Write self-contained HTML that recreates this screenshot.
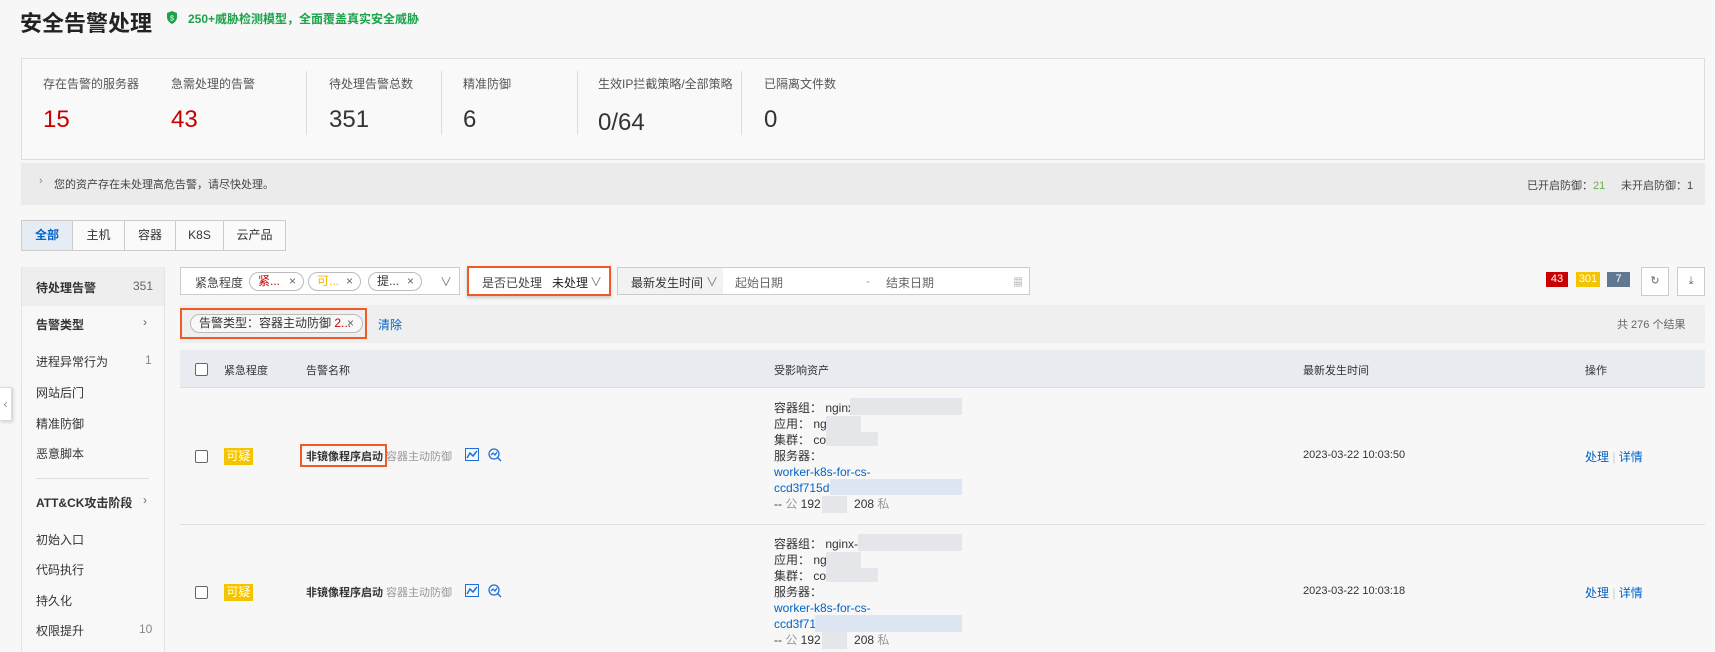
<!DOCTYPE html>
<html><head><meta charset="utf-8"><style>
*{margin:0;padding:0;box-sizing:border-box}
body{width:1715px;height:652px;background:#f7f7f7;font-family:"Liberation Sans","Noto Sans CJK SC",sans-serif;font-size:12px;color:#333;position:relative;overflow:hidden}
.a{position:absolute;white-space:nowrap}
.lbl{font-size:12px;color:#555}
.num{font-size:24px;color:#333}
.red{color:#c80000}
.vd{position:absolute;width:1px;background:#ddd}
.tab{position:absolute;top:220px;height:31px;border:1px solid #ccc;background:#fafafa;text-align:center;line-height:29px;font-size:12px}
.pill{position:absolute;top:272px;height:19px;border:1px solid #bbb;border-radius:10px;line-height:17px;padding-left:8px;font-size:12px;background:#fff}
.pill i{position:absolute;right:7px;font-style:normal;color:#666}
.side{font-size:12px;color:#333}
.blue{color:#0064c8}
.ast{font-size:12px;line-height:16px}
.blur{position:absolute;background:#e4e6ea}
.cb{position:absolute;width:13px;height:13px;border:1px solid #666;border-radius:2px;background:#fff}
.badge{position:absolute;background:#f5c400;color:#fff;font-size:12px;text-align:center;line-height:17px;height:17px;width:29px}
</style></head><body>

<div class="a" style="left:20px;top:6px;font-size:22px;font-weight:bold;color:#222">安全告警处理</div>
<svg class="a" style="left:166px;top:11px" width="12" height="13" viewBox="0 0 12 13"><path d="M6 0L11 2V6C11 9 9 11.5 6 13C3 11.5 1 9 1 6V2Z" fill="#1aa34a"/><text x="6" y="9.5" font-size="7" fill="#fff" text-anchor="middle" font-family="Liberation Sans">$</text></svg>
<div class="a" style="left:188px;top:10px;font-size:12px;color:#1aa34a;font-weight:bold">250+威胁检测模型，全面覆盖真实安全威胁</div>

<div class="a" style="left:21px;top:58px;width:1684px;height:102px;border:1px solid #ddd;background:#f9f9f9"></div>
<div class="a lbl" style="left:43px;top:75px">存在告警的服务器</div>
<div class="a lbl" style="left:171px;top:75px">急需处理的告警</div>
<div class="a lbl" style="left:329px;top:75px">待处理告警总数</div>
<div class="a lbl" style="left:463px;top:75px">精准防御</div>
<div class="a lbl" style="left:598px;top:75px">生效IP拦截策略/全部策略</div>
<div class="a lbl" style="left:764px;top:75px">已隔离文件数</div>
<div class="vd" style="left:306px;top:71px;height:64px"></div>
<div class="vd" style="left:441px;top:71px;height:64px"></div>
<div class="vd" style="left:577px;top:71px;height:64px"></div>
<div class="vd" style="left:741px;top:71px;height:64px"></div>
<div class="a num red" style="left:43px;top:106px">15</div>
<div class="a num red" style="left:171px;top:106px">43</div>
<div class="a num" style="left:329px;top:106px">351</div>
<div class="a num" style="left:463px;top:106px">6</div>
<div class="a num" style="left:598px;top:109px">0/64</div>
<div class="a num" style="left:764px;top:106px">0</div>

<div class="a" style="left:21px;top:163px;width:1684px;height:42px;background:#ebebeb"></div>
<div class="a" style="left:39px;top:175px;color:#888;font-size:11px">›</div>
<div class="a" style="left:54px;top:176px;font-size:11px;color:#444">您的资产存在未处理高危告警，请尽快处理。</div>
<div class="a" style="left:1527px;top:177px;font-size:11px;color:#444">已开启防御：<span style="color:#6ab04c">21</span></div>
<div class="a" style="left:1621px;top:177px;font-size:11px;color:#444">未开启防御：1</div>

<div class="tab" style="left:21px;width:52px;background:#e6ecf4;color:#0064c8;font-weight:bold">全部</div>
<div class="tab" style="left:72px;width:53px">主机</div>
<div class="tab" style="left:124px;width:52px">容器</div>
<div class="tab" style="left:175px;width:49px">K8S</div>
<div class="tab" style="left:223px;width:63px">云产品</div>

<!-- sidebar -->
<div class="a" style="left:21px;top:267px;width:144px;height:385px;border-left:1px solid #e4e4e4;border-right:1px solid #e4e4e4;background:#f8f8f8"></div>
<div class="a" style="left:22px;top:267px;width:142px;height:39px;background:#eeeeee"></div>
<div class="a side" style="left:36px;top:279px;font-weight:bold">待处理告警</div>
<div class="a side" style="left:133px;top:279px;color:#666">351</div>
<div class="a side" style="left:36px;top:316px;font-weight:bold">告警类型</div>
<div class="a side" style="left:143px;top:315px;color:#666">›</div>
<div class="a side" style="left:36px;top:353px">进程异常行为</div>
<div class="a side" style="left:145px;top:353px;color:#888">1</div>
<div class="a side" style="left:36px;top:384px">网站后门</div>
<div class="a side" style="left:36px;top:415px">精准防御</div>
<div class="a side" style="left:36px;top:445px">恶意脚本</div>
<div class="a" style="left:36px;top:478px;width:113px;height:1px;background:#ddd"></div>
<div class="a side" style="left:36px;top:494px;font-weight:bold">ATT&amp;CK攻击阶段</div>
<div class="a side" style="left:143px;top:493px;color:#666">›</div>
<div class="a side" style="left:36px;top:531px">初始入口</div>
<div class="a side" style="left:36px;top:561px">代码执行</div>
<div class="a side" style="left:36px;top:592px">持久化</div>
<div class="a side" style="left:36px;top:622px">权限提升</div>
<div class="a side" style="left:139px;top:622px;color:#888">10</div>
<div class="a" style="left:0;top:387px;width:12px;height:34px;background:#fff;border:1px solid #ddd;border-left:none;box-shadow:1px 1px 3px #ccc;color:#888;font-size:12px;line-height:32px;text-align:center">‹</div>

<!-- filters -->
<div class="a" style="left:180px;top:267px;width:280px;height:28px;border:1px solid #ccc;background:#fff"></div>
<div class="a" style="left:195px;top:274px;color:#444">紧急程度</div>
<div class="pill" style="left:249px;width:55px"><span style="color:#c80000">紧...</span><i>×</i></div>
<div class="pill" style="left:308px;width:53px"><span style="color:#f5b400">可...</span><i>×</i></div>
<div class="pill" style="left:368px;width:54px"><span>提...</span><i>×</i></div>
<div class="a" style="left:440px;top:273px;color:#777">∨</div>
<div class="a" style="left:467px;top:266px;width:144px;height:30px;border:2px solid #f05a28;background:#fff;box-shadow:0 2px 3px #ccc"></div>
<div class="a" style="left:482px;top:274px;color:#444">是否已处理 &nbsp; <span style="color:#222">未处理</span></div>
<div class="a" style="left:590px;top:273px;color:#777">∨</div>
<div class="a" style="left:617px;top:267px;width:413px;height:28px;border:1px solid #ccc;background:#fff"></div>
<div class="a" style="left:618px;top:268px;width:105px;height:26px;background:#f2f2f2"></div>
<div class="a" style="left:631px;top:274px;color:#333">最新发生时间</div>
<div class="a" style="left:706px;top:273px;color:#777">∨</div>
<div class="a" style="left:735px;top:274px;color:#666">起始日期</div>
<div class="a" style="left:866px;top:274px;color:#999">-</div>
<div class="a" style="left:886px;top:274px;color:#666">结束日期</div>
<div class="a" style="left:1013px;top:274px;color:#999;font-size:10px">▦</div>

<div class="a" style="left:1546px;top:272px;width:22px;height:15px;background:#c80000;color:#fff;font-size:11px;text-align:center;line-height:15px">43</div>
<div class="a" style="left:1576px;top:272px;width:24px;height:15px;background:#f5c400;color:#fff;font-size:11px;text-align:center;line-height:15px">301</div>
<div class="a" style="left:1607px;top:272px;width:23px;height:15px;background:#5f7890;color:#fff;font-size:11px;text-align:center;line-height:15px">7</div>
<div class="a" style="left:1641px;top:267px;width:28px;height:29px;border:1px solid #ccc;background:#fff;text-align:center;line-height:27px;font-size:11px;color:#666">↻</div>
<div class="a" style="left:1677px;top:267px;width:28px;height:29px;border:1px solid #ccc;background:#fff;text-align:center;line-height:27px;font-size:11px;color:#666">⤓</div>

<div class="a" style="left:180px;top:305px;width:1525px;height:38px;background:#efefef"></div>
<div class="a" style="left:180px;top:308px;width:187px;height:31px;border:2px solid #f05a28"></div>
<div class="a" style="left:190px;top:314px;width:173px;height:19px;border:1px solid #bbb;border-radius:10px;background:#f8f8f8;line-height:17px;padding-left:8px">告警类型：容器主动防御 <span style="color:#c80000">2...</span><span style="position:absolute;right:8px;color:#666">×</span></div>
<div class="a blue" style="left:378px;top:316px;font-size:12px">清除</div>
<div class="a" style="left:1617px;top:316px;color:#666;font-size:11px">共 276 个结果</div>

<!-- table -->
<div class="a" style="left:180px;top:350px;width:1525px;height:38px;background:#e8ecf1;border-bottom:1px solid #dde"></div>
<div class="cb" style="left:195px;top:363px"></div>
<div class="a" style="left:224px;top:362px;font-size:11px">紧急程度</div>
<div class="a" style="left:306px;top:362px;font-size:11px">告警名称</div>
<div class="a" style="left:774px;top:362px;font-size:11px">受影响资产</div>
<div class="a" style="left:1303px;top:362px;font-size:11px">最新发生时间</div>
<div class="a" style="left:1585px;top:362px;font-size:11px">操作</div>

<!-- row1 -->
<div class="cb" style="left:195px;top:450px"></div>
<div class="badge" style="left:224px;top:448px">可疑</div>
<div class="a" style="left:300px;top:444px;width:87px;height:23px;border:2px solid #f05a28"></div>
<div class="a" style="left:306px;top:448px;font-weight:bold;font-size:11px">非镜像程序启动</div>
<div class="a" style="left:386px;top:448px;color:#999;font-size:11px">容器主动防御</div>
<svg class="a" style="left:465px;top:448px" width="14" height="13"><rect x="0.5" y="0.5" width="13" height="12" fill="none" stroke="#1e6fd9"/><path d="M2 10L5 5L8 8L12 3" fill="none" stroke="#1e6fd9" stroke-width="1.5"/></svg>
<svg class="a" style="left:488px;top:448px" width="14" height="14"><circle cx="6" cy="6" r="5" fill="none" stroke="#1e6fd9" stroke-width="1.3"/><path d="M9.5 9.5L13 13M3 7L5 5L7 7L9 4" fill="none" stroke="#1e6fd9" stroke-width="1.3"/></svg>
<div class="a ast" style="left:774px;top:400px">容器组：&nbsp;nginx-<br>应用：&nbsp;ngi<br>集群：&nbsp;cor<br>服务器：<br><span class="blue">worker-k8s-for-cs-</span><br><span class="blue">ccd3f715df</span><br>-- <span style="color:#999">公</span> 192 &nbsp; &nbsp; &nbsp; &nbsp; &nbsp;208 <span style="color:#999">私</span></div>
<div class="blur" style="left:850px;top:398px;width:112px;height:17px"></div>
<div class="blur" style="left:826px;top:416px;width:35px;height:30px"></div>
<div class="blur" style="left:830px;top:432px;width:48px;height:14px"></div>
<div class="blur" style="left:830px;top:479px;width:132px;height:16px;background:#dde6f2"></div>
<div class="blur" style="left:822px;top:496px;width:25px;height:17px"></div>
<div class="a" style="left:1303px;top:449px;font-size:11px">2023-03-22 10:03:50</div>
<div class="a blue" style="left:1585px;top:448px;font-size:12px">处理 <span style="color:#ccc">|</span> 详情</div>
<div class="a" style="left:180px;top:524px;width:1525px;height:1px;background:#e0e0e0"></div>

<!-- row2 -->
<div class="cb" style="left:195px;top:586px"></div>
<div class="badge" style="left:224px;top:584px">可疑</div>
<div class="a" style="left:306px;top:584px;font-weight:bold;font-size:11px">非镜像程序启动</div>
<div class="a" style="left:386px;top:584px;color:#999;font-size:11px">容器主动防御</div>
<svg class="a" style="left:465px;top:584px" width="14" height="13"><rect x="0.5" y="0.5" width="13" height="12" fill="none" stroke="#1e6fd9"/><path d="M2 10L5 5L8 8L12 3" fill="none" stroke="#1e6fd9" stroke-width="1.5"/></svg>
<svg class="a" style="left:488px;top:584px" width="14" height="14"><circle cx="6" cy="6" r="5" fill="none" stroke="#1e6fd9" stroke-width="1.3"/><path d="M9.5 9.5L13 13M3 7L5 5L7 7L9 4" fill="none" stroke="#1e6fd9" stroke-width="1.3"/></svg>
<div class="a ast" style="left:774px;top:536px">容器组：&nbsp;nginx-t<br>应用：&nbsp;ngi<br>集群：&nbsp;cor<br>服务器：<br><span class="blue">worker-k8s-for-cs-</span><br><span class="blue">ccd3f715</span><br>-- <span style="color:#999">公</span> 192 &nbsp; &nbsp; &nbsp; &nbsp; &nbsp;208 <span style="color:#999">私</span></div>
<div class="blur" style="left:858px;top:534px;width:104px;height:17px"></div>
<div class="blur" style="left:826px;top:552px;width:35px;height:30px"></div>
<div class="blur" style="left:830px;top:568px;width:48px;height:14px"></div>
<div class="blur" style="left:815px;top:615px;width:147px;height:17px;background:#dde6f2"></div>
<div class="blur" style="left:822px;top:632px;width:25px;height:17px"></div>
<div class="a" style="left:1303px;top:585px;font-size:11px">2023-03-22 10:03:18</div>
<div class="a blue" style="left:1585px;top:584px;font-size:12px">处理 <span style="color:#ccc">|</span> 详情</div>
</body></html>
